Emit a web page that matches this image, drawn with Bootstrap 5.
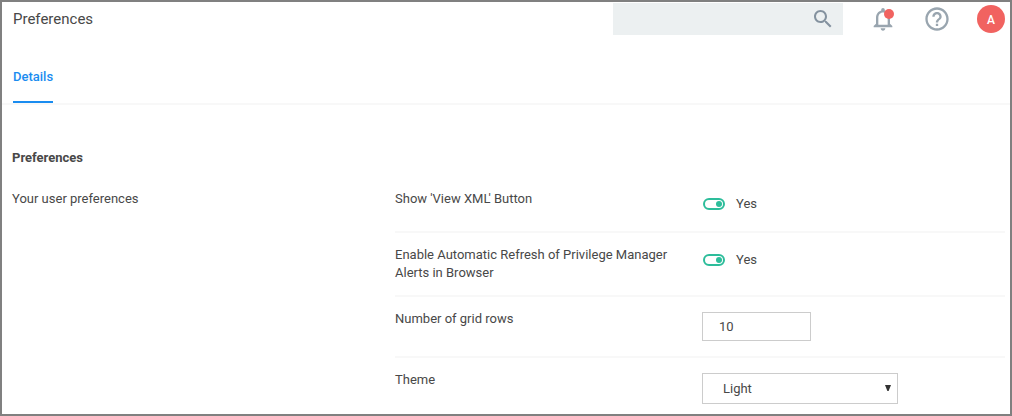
<!DOCTYPE html>
<html lang="en">
<head>
<meta charset="utf-8">
<title>Preferences</title>
<link rel="stylesheet" href="https://cdn.jsdelivr.net/npm/bootstrap@5.3.0/dist/css/bootstrap.min.css">
<style>
body{font-family:Roboto,sans-serif;font-size:13px;line-height:18px;color:#484848;background:#fff}
.app-frame{height:416px;border:2px solid #808080}
.topbar{height:56px;padding:1px 5px 0 11px}
.page-title{font-size:15px;line-height:32px}
.search-box{width:230px;height:32px;background:#ecf0f1;padding-right:8px}
.tool-icons{height:32px;margin-left:26px}
.alert-dot{position:absolute;width:10px;height:10px;right:3px;top:4px;background:#f16360}
.help-icon{margin-left:26px}
.avatar{width:28px;height:28px;background:#f16360;font-size:12px;padding-top:2px;margin-left:26px}
.tabs{height:47px;padding-left:11px;border-bottom:2px solid #f8f8f8}
.tab-link{color:#1a8cf0;font-weight:500;height:45px;padding-top:10px;border-bottom:2px solid #1a8cf0;text-decoration:none}
.content{padding:44px 5px 0 10px}
.content h2{font-size:13px;line-height:18px;font-weight:700;margin:0 0 23px}
.intro{width:383px}
.pref-row{height:61px;border-bottom:2px solid #f8f8f8;padding-top:13px}
.pref-row:first-child{height:43px;padding-top:0}
.pref-row-tall{height:64px}
.pref-label{width:307px}
.kern{letter-spacing:-2px}
.toggle-text{margin-left:10px;padding-top:1px}
.txt-field{width:109px;height:29px;border:1px solid #ccc;border-radius:0;margin-top:2px;padding:0 16px;font-size:13px;line-height:27px;color:#484848}
.theme-field{width:196px;height:31px;border:1px solid #ccc;margin-top:2px;padding:0 6px 0 20px}
.caret{margin-bottom:2px}
</style>
<script src="https://cdn.jsdelivr.net/npm/bootstrap@5.3.0/dist/js/bootstrap.bundle.min.js"></script>
</head>
<body>
<div class="app-frame overflow-hidden">
  <header class="topbar d-flex align-items-start">
    <div class="page-title me-auto">Preferences</div>
    <div class="search-box d-flex align-items-center justify-content-end">
      <svg width="24" height="24" viewBox="0 0 24 24" fill="#84929f"><path d="M15.5 14h-.79l-.28-.27C15.41 12.59 16 11.11 16 9.5 16 5.91 13.09 3 9.5 3S3 5.91 3 9.5 5.91 16 9.5 16c1.61 0 3.09-.59 4.23-1.57l.27.28v.79l5 4.99L20.49 19l-4.99-5zm-6 0C7.01 14 5 11.99 5 9.5S7.01 5 9.5 5 14 7.01 14 9.5 11.99 14 9.5 14z"/></svg>
    </div>
    <div class="tool-icons d-flex align-items-center">
      <div class="position-relative d-flex">
        <svg width="28" height="28" viewBox="0 0 24 24" fill="#99a5af"><path d="M12 22c1.1 0 2-.9 2-2h-4c0 1.1.9 2 2 2zm6-6v-5c0-3.07-1.63-5.64-4.5-6.32V4c0-.83-.67-1.5-1.5-1.5s-1.5.67-1.5 1.5v.68C7.64 5.36 6 7.92 6 11v5l-2 2v1h16v-1l-2-2zm-2 1H8v-6c0-2.48 1.51-4.5 4-4.5s4 2.02 4 4.5v6z"/></svg>
        <span class="alert-dot rounded-circle"></span>
      </div>
      <svg class="help-icon" width="28" height="28" viewBox="0 0 24 24" fill="#99a5af"><path d="M11 18h2v-2h-2v2zm1-16C6.48 2 2 6.48 2 12s4.48 10 10 10 10-4.48 10-10S17.52 2 12 2zm0 18c-4.41 0-8-3.59-8-8s3.59-8 8-8 8 3.59 8 8-3.59 8-8 8zm0-14c-2.21 0-4 1.79-4 4h2c0-1.1.9-2 2-2s2 .9 2 2c0 2-3 1.75-3 5h2c0-2.25 3-2.5 3-5 0-2.21-1.79-4-4-4z"/></svg>
      <div class="avatar rounded-circle text-white fw-medium d-flex align-items-center justify-content-center lh-1">A</div>
    </div>
  </header>
  <nav class="tabs d-flex"><a class="tab-link" href="#">Details</a></nav>
  <main class="content">
    <h2>Preferences</h2>
    <div class="d-flex">
      <div class="intro">Your user preferences</div>
      <div class="flex-grow-1">
        <div class="pref-row d-flex">
          <div class="pref-label">Show 'View XM<span class="kern">L</span>' Button</div>
          <div class="d-flex align-items-start pt-1">
            <svg width="24" height="20" viewBox="0 0 24 20"><rect x="2" y="5" width="20" height="10" rx="5" fill="none" stroke="#2dbd9b" stroke-width="2"/><circle cx="17" cy="10" r="3" fill="#2dbd9b"/></svg>
            <span class="toggle-text">Yes</span>
          </div>
        </div>
        <div class="pref-row pref-row-tall d-flex">
          <div class="pref-label pe-4">Enable Automatic Refresh of Privilege Manager Alerts in Browser</div>
          <div class="d-flex align-items-start pt-1">
            <svg width="24" height="20" viewBox="0 0 24 20"><rect x="2" y="5" width="20" height="10" rx="5" fill="none" stroke="#2dbd9b" stroke-width="2"/><circle cx="17" cy="10" r="3" fill="#2dbd9b"/></svg>
            <span class="toggle-text">Yes</span>
          </div>
        </div>
        <div class="pref-row d-flex">
          <div class="pref-label">Number of grid rows</div>
          <input class="txt-field" type="text" value="10" aria-label="Number of grid rows">
        </div>
        <div class="pref-row d-flex border-0">
          <div class="pref-label">Theme</div>
          <div class="theme-field d-flex align-items-center justify-content-between" role="combobox">
            <span>Light</span>
            <svg class="caret" width="6" height="6" viewBox="0 0 6 6"><path d="M0 0h6L3.600 6H2.400z" fill="#333"/></svg>
          </div>
        </div>
      </div>
    </div>
  </main>
</div>
</body>
</html>
